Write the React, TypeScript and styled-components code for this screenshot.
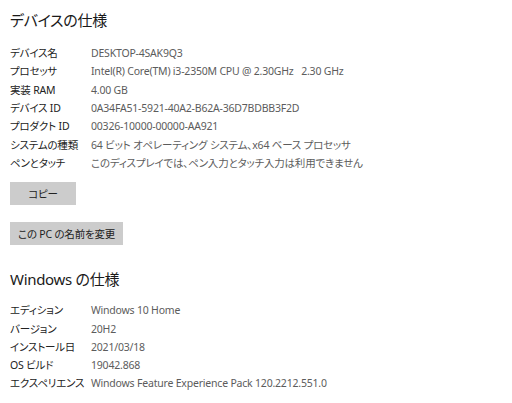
import React from "react";
import styled, { createGlobalStyle } from "styled-components";

const Global = createGlobalStyle`
  html, body { margin: 0; padding: 0; background: #ffffff; }
  body {
    font-family: "Noto Sans", "Noto Sans CJK JP", sans-serif;
    font-feature-settings: "palt" 1;
  }
`;

const Page = styled.div`
  width: 512px;
  height: 403px;
  overflow: hidden;
  padding: 8px 0 0 10px;
  box-sizing: border-box;
  background: #fff;
  font-feature-settings: "palt" 1;
`;

const Heading = styled.h2<{ $top?: number }>`
  margin: ${(p) => p.$top ?? 0}px 0 0 0;
  font-family: "Noto Sans", "Noto Sans CJK JP", sans-serif;
  font-size: 15px;
  font-weight: 400;
  letter-spacing: -0.3px;
  line-height: 24px;
  color: #1a1a1a;
`;

const Table = styled.div<{ $top: number }>`
  display: grid;
  grid-template-columns: 81px auto;
  grid-auto-rows: 18.3px;
  align-items: center;
  margin-top: ${(p) => p.$top}px;
`;

const Label = styled.div`
  font-family: "Noto Sans", "Noto Sans CJK JP", sans-serif;
  font-size: 10.5px;
  letter-spacing: -0.2px;
  color: #222;
  white-space: nowrap;
  line-height: 18px;
`;

const Value = styled.div`
  font-family: "Noto Sans", "Noto Sans CJK JP", sans-serif;
  font-size: 10.5px;
  letter-spacing: -0.2px;
  color: #5c5c5c;
  white-space: nowrap;
  line-height: 18px;
`;

const Button = styled.button<{ $w: number; $top: number }>`
  display: block;
  width: ${(p) => p.$w}px;
  height: 23px;
  margin-top: ${(p) => p.$top}px;
  border: none;
  background: #cccccc;
  color: #222;
  font-family: "Noto Sans", "Noto Sans CJK JP", sans-serif;
  font-feature-settings: "palt" 1;
  font-size: 10.5px;
  letter-spacing: -0.2px;
  padding: 0;
`;

const device: [string, string][] = [
  ["デバイス名", "DESKTOP-4SAK9Q3"],
  ["プロセッサ", "Intel(R) Core(TM) i3-2350M CPU @ 2.30GHz\u00a0\u00a0\u00a02.30 GHz"],
  ["実装 RAM", "4.00 GB"],
  ["デバイス ID", "0A34FA51-5921-40A2-B62A-36D7BDBB3F2D"],
  ["プロダクト ID", "00326-10000-00000-AA921"],
  ["システムの種類", "64 ビット オペレーティング システム、x64 ベース プロセッサ"],
  ["ペンとタッチ", "このディスプレイでは、ペン入力とタッチ入力は利用できません"],
];

const windows: [string, string][] = [
  ["エディション", "Windows 10 Home"],
  ["バージョン", "20H2"],
  ["インストール日", "2021/03/18"],
  ["OS ビルド", "19042.868"],
  ["エクスペリエンス", "Windows Feature Experience Pack 120.2212.551.0"],
];

function Spec({ rows, top }: { rows: [string, string][]; top: number }) {
  return (
    <Table $top={top}>
      {rows.map(([k, v]) => (
        <React.Fragment key={k}>
          <Label>{k}</Label>
          <Value>{v}</Value>
        </React.Fragment>
      ))}
    </Table>
  );
}

export default function App() {
  return (
    <Page>
      <Global />
      <Heading>デバイスの仕様</Heading>
      <Spec rows={device} top={12} />
      <Button $w={66} $top={10}>コピー</Button>
      <Button $w={113} $top={17}>この PC の名前を変更</Button>
      <Heading $top={22}>Windows の仕様</Heading>
      <Spec rows={windows} top={10} />
    </Page>
  );
}
